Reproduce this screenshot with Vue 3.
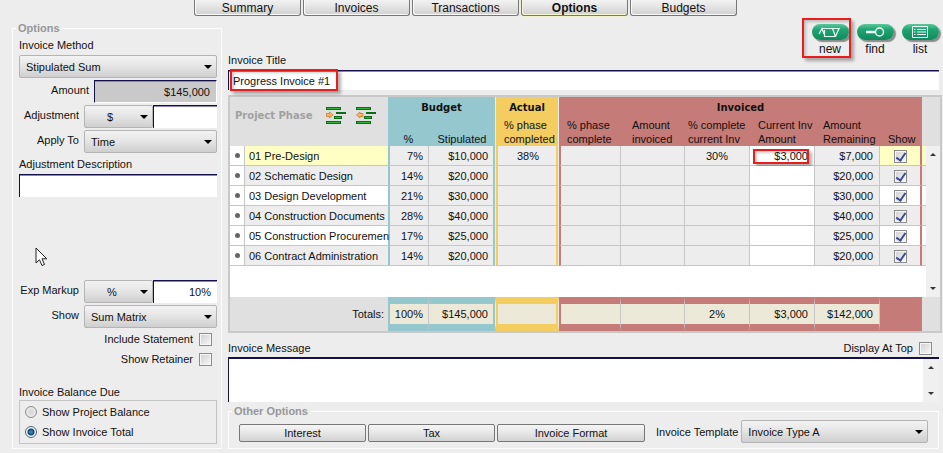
<script setup>
import { ref } from 'vue'

const tabs = ['Summary', 'Invoices', 'Transactions', 'Options', 'Budgets']
const activeTab = ref('Options')

const method = ref('Stipulated Sum')
const amount = ref('$145,000')
const adjustmentUnit = ref('$')
const adjustment = ref('')
const applyTo = ref('Time')
const description = ref('')
const markupUnit = ref('%')
const markup = ref('10%')
const showAs = ref('Sum Matrix')
const includeStatement = ref(false)
const showRetainer = ref(false)
const balance = ref('total')

const title = ref('Progress Invoice #1')
const message = ref('')
const displayAtTop = ref(false)
const template = ref('Invoice Type A')

const phases = ref([
  { name: '01 Pre-Design', pct: '7%', budget: '$10,000', done: '38%', complete: '30%', current: '$3,000', remaining: '$7,000', show: true, active: true },
  { name: '02 Schematic Design', pct: '14%', budget: '$20,000', remaining: '$20,000', show: true },
  { name: '03 Design Development', pct: '21%', budget: '$30,000', remaining: '$30,000', show: true },
  { name: '04 Construction Documents', pct: '28%', budget: '$40,000', remaining: '$40,000', show: true },
  { name: '05 Construction Procuremen', pct: '17%', budget: '$25,000', remaining: '$25,000', show: true },
  { name: '06 Contract Administration', pct: '14%', budget: '$20,000', remaining: '$20,000', show: true },
])
</script>

<template>
  <div class="page">
    <nav class="tabs">
      <button
        v-for="tab in tabs"
        :key="tab"
        type="button"
        class="tab"
        :class="{ active: tab === activeTab }"
        @click="activeTab = tab"
      >{{ tab }}</button>
    </nav>

    <div class="columns">
      <fieldset class="group">
        <legend>Options</legend>
        <div class="stack">
          <label class="line" for="method">Invoice Method</label>
          <span class="pick">
            <select id="method" v-model="method"><option>Stipulated Sum</option></select>
          </span>
          <div class="row">
            <label class="wide" for="amount">Amount</label>
            <input id="amount" v-model="amount" class="field number shaded" type="text" readonly>
          </div>
          <div class="row">
            <label for="adjustment">Adjustment</label>
            <span class="joined">
              <span class="pick unit">
                <select v-model="adjustmentUnit" aria-label="Adjustment unit"><option>$</option><option>%</option></select>
              </span>
              <input id="adjustment" v-model="adjustment" class="field number" type="text">
            </span>
          </div>
          <div class="row">
            <label for="apply">Apply To</label>
            <span class="pick">
              <select id="apply" v-model="applyTo"><option>Time</option></select>
            </span>
          </div>
          <label class="line spaced" for="description">Adjustment Description</label>
          <input id="description" v-model="description" class="field" type="text">

          <div class="void">
            <svg class="pointer" width="13" height="20" viewBox="0 0 13 20" aria-hidden="true">
              <path d="M1 1V16L4.500 12.800L7 18.500L9.500 17.400L7 11.800H11.800Z" fill="#fff" stroke="#222" stroke-width="1" />
            </svg>
          </div>

          <div class="row">
            <label for="markup">Exp Markup</label>
            <span class="joined">
              <span class="pick unit">
                <select v-model="markupUnit" aria-label="Markup unit"><option>%</option><option>$</option></select>
              </span>
              <input id="markup" v-model="markup" class="field number" type="text">
            </span>
          </div>
          <div class="row">
            <label for="showas">Show</label>
            <span class="pick">
              <select id="showas" v-model="showAs"><option>Sum Matrix</option></select>
            </span>
          </div>
          <label class="tick">Include Statement <input v-model="includeStatement" type="checkbox"></label>
          <label class="tick">Show Retainer <input v-model="showRetainer" type="checkbox"></label>

          <div class="balance" role="radiogroup" aria-labelledby="balance-title">
            <div id="balance-title" class="line">Invoice Balance Due</div>
            <div class="radios">
              <label><input v-model="balance" type="radio" name="balance" value="project"> Show Project Balance</label>
              <label><input v-model="balance" type="radio" name="balance" value="total"> Show Invoice Total</label>
            </div>
          </div>
        </div>
      </fieldset>

      <main>
        <div class="top">
          <label class="line" for="title">Invoice Title</label>
          <div class="tools">
            <button type="button" class="tool">
              <span class="pill">
                <svg width="24" height="12" viewBox="0 0 24 12" fill="none" stroke="#e9fff5" aria-hidden="true">
                  <path d="M1 8L4 2.500L6 8M4 2.500H15.500M6.500 4V10.500H17.500L21 2.500H14.500L17.500 10.500M20 2.500H22" stroke-width="1.200" />
                </svg>
              </span>
              new
              <span class="mark mark-tool"></span>
            </button>
            <button type="button" class="tool">
              <span class="pill">
                <svg width="24" height="12" viewBox="0 0 24 12" fill="none" stroke="#e9fff5" aria-hidden="true">
                  <path d="M3 6H12" stroke-width="2.500" />
                  <circle cx="16.500" cy="6" r="4" stroke-width="1.500" />
                </svg>
              </span>
              find
            </button>
            <button type="button" class="tool">
              <span class="pill">
                <svg width="24" height="12" viewBox="0 0 24 12" fill="none" stroke="#e9fff5" aria-hidden="true">
                  <path d="M4.500 .5H19.500V11.500H4.500ZM6 3.500H7.500M9 3.500H18M6 6H7.500M9 6H18M6 8.500H7.500M9 8.500H18" />
                </svg>
              </span>
              list
            </button>
          </div>
        </div>
        <div class="title-box">
          <input id="title" v-model="title" class="field title" type="text">
          <span class="mark mark-title"></span>
        </div>

        <div class="matrix">
          <table>
            <colgroup>
              <col class="w-dot"><col><col class="w-pct"><col class="w-budget"><col class="w-actual">
              <col class="w-phase"><col class="w-invoiced"><col class="w-money"><col class="w-money">
              <col class="w-money"><col class="w-show"><col class="w-tail"><col class="w-scroll">
            </colgroup>
            <thead>
              <tr class="groups">
                <th colspan="2" rowspan="2" class="corner">
                  <div class="phase-head">
                    <span>Project Phase</span>
                    <button type="button" aria-label="Indent phase">
                      <svg width="20" height="17" viewBox="0 0 20 17" aria-hidden="true">
                        <path d="M0 0H15V3H0ZM10 5H20V7H10ZM8 9H16V12H8ZM0 14H15V17H0Z" fill="#0c6b16" />
                        <path d="M1 1H14V2H1ZM9 10H15V11H9ZM1 15H14V16H1Z" fill="#35b53b" />
                        <path d="M.5 6.500H3.500V5L7 8L3.500 11V9.500H.5Z" fill="#ffb45a" stroke="#c9702a" stroke-width=".7" />
                      </svg>
                    </button>
                    <button type="button" aria-label="Outdent phase">
                      <svg width="20" height="17" viewBox="0 0 20 17" aria-hidden="true">
                        <path d="M0 0H15V3H0ZM10 5H20V7H10ZM8 9H16V12H8ZM0 14H15V17H0Z" fill="#0c6b16" />
                        <path d="M1 1H14V2H1ZM9 10H15V11H9ZM1 15H14V16H1Z" fill="#35b53b" />
                        <path d="M7 6.500H4V5L.5 8L4 11V9.500H7Z" fill="#ffb45a" stroke="#c9702a" stroke-width=".7" />
                      </svg>
                    </button>
                  </div>
                </th>
                <th colspan="2" class="teal gap-right">Budget</th>
                <th class="gold gap-right">Actual</th>
                <th colspan="6" class="rose">Invoiced</th>
                <td colspan="2" rowspan="2" class="grey"></td>
              </tr>
              <tr class="heads">
                <th class="teal mid">%</th>
                <th class="teal mid gap-right">Stipulated</th>
                <th class="gold gap-right">% phase<br>completed</th>
                <th class="rose">% phase<br>complete</th>
                <th class="rose inset">Amount<br>invoiced</th>
                <th class="rose tight">% complete<br>current Inv</th>
                <th class="rose">Current Inv<br>Amount</th>
                <th class="rose">Amount<br>Remaining</th>
                <th class="rose">Show</th>
              </tr>
            </thead>
            <tbody>
              <tr v-for="(p, i) in phases" :key="p.name" class="phase" :class="{ active: p.active, odd: i % 2 === 0 }">
                <td class="dot"><i></i></td>
                <td class="name">{{ p.name }}</td>
                <td class="num teal-start">{{ p.pct }}</td>
                <td class="num teal-end">{{ p.budget }}</td>
                <td class="mid gold-cell">{{ p.done }}</td>
                <td class="num rose-start"></td>
                <td class="num"></td>
                <td class="mid">{{ p.complete }}</td>
                <td class="num edit">{{ p.current }}<span v-if="p.active" class="mark mark-cell"></span></td>
                <td class="num">{{ p.remaining }}</td>
                <td class="mid show"><input v-model="p.show" type="checkbox" :aria-label="'Show ' + p.name"></td>
                <td class="tail"></td>
                <td v-if="i === 0" rowspan="7" class="scroll">
                  <div class="bar">
                    <button type="button" class="up" aria-label="Scroll up"></button>
                    <button type="button" class="down" aria-label="Scroll down"></button>
                  </div>
                </td>
              </tr>
              <tr class="filler"><td colspan="12"></td></tr>
            </tbody>
            <tfoot>
              <tr>
                <td colspan="2" class="grey label">Totals:</td>
                <td class="sum on-teal teal-start">100%</td>
                <td class="sum on-teal teal-end">$145,000</td>
                <td class="sum on-gold gold-cell"></td>
                <td class="sum on-rose rose-start"></td>
                <td class="sum on-rose"></td>
                <td class="sum on-rose mid">2%</td>
                <td class="sum on-rose">$3,000</td>
                <td class="sum on-rose">$142,000</td>
                <td class="rose"></td>
                <td colspan="2" class="grey"></td>
              </tr>
            </tfoot>
          </table>
        </div>

        <div class="message-head">
          <label for="message">Invoice Message</label>
          <label class="tick">Display At Top <input v-model="displayAtTop" type="checkbox"></label>
        </div>
        <div class="message">
          <textarea id="message" v-model="message"></textarea>
          <div class="bar">
            <button type="button" class="up" aria-label="Scroll message up"></button>
            <button type="button" class="down" aria-label="Scroll message down"></button>
          </div>
        </div>

        <fieldset class="group other">
          <legend>Other Options</legend>
          <div class="actions">
            <button type="button" class="push">Interest</button>
            <button type="button" class="push">Tax</button>
            <button type="button" class="push long">Invoice Format</button>
            <label for="template">Invoice Template</label>
            <span class="pick">
              <select id="template" v-model="template"><option>Invoice Type A</option></select>
            </span>
          </div>
        </fieldset>
      </main>
    </div>
  </div>
</template>

<style>
body {
  background: #ededed;
}
</style>

<style scoped>
.page,
.page * {
  box-sizing: border-box;
}
.page {
  font: 11px/14px "Liberation Sans", Arial, sans-serif;
  color: #111;
  padding-bottom: 4px;
  overflow: hidden;
}
button,
input,
select,
textarea {
  font: inherit;
  color: inherit;
  margin: 0;
  border-radius: 0;
}
button {
  padding: 0;
  border: 0;
  background: none;
}

/* tab strip */
.tabs {
  display: flex;
  justify-content: center;
  gap: 2px;
  height: 16px;
  padding-right: 12px;
}
.tab {
  width: 107px;
  font-size: 12px;
  border: 1px solid #777;
  border-top: 0;
  border-radius: 0 0 3px 3px;
  background: linear-gradient(#f2f2f2, #e6e6e6 40%, #d0d0d0);
  box-shadow: inset 1px -1px #fafafa;
}
.tab.active {
  font-weight: bold;
  box-shadow: inset 1px -1px #f4f6cf, 0 1px #f1f3cf;
}

/* page columns */
.columns {
  display: grid;
  grid-template-columns: 210px minmax(0, 1fr);
  gap: 6px;
  padding: 5px 1px 0 12px;
}
main {
  min-width: 0;
}
.group {
  margin: 0;
  min-width: 0;
  padding: 0 4px 4px 6px;
  border: 1px solid #fcfcfc;
}
.group legend {
  margin-left: -3px;
  padding: 0 2px;
  font-weight: bold;
  color: #979797;
}
.stack {
  display: flex;
  flex-direction: column;
  gap: 2px;
  padding-top: 2px;
}
.line {
  line-height: 16px;
}
.spaced {
  margin-top: 1px;
}
.row {
  display: flex;
  gap: 5px;
}
.row > label {
  flex: 0 0 60px;
  line-height: 20px;
  text-align: right;
}
.row > label.wide {
  flex-basis: 70px;
}
.joined {
  display: flex;
  flex: 1;
  min-width: 0;
}

/* form controls */
.pick {
  position: relative;
  display: flex;
  flex: 1 0 auto;
  height: 23px;
}
.pick select {
  appearance: none;
  width: 100%;
  padding: 0 18px 0 6px;
  border: 1px solid #b4b4b4;
  border-radius: 2px;
  background: linear-gradient(#f3f3f3, #e4e4e4 50%, #cfcfcf);
}
.pick::after {
  content: "";
  position: absolute;
  right: 5px;
  top: 10px;
  border: 4px solid transparent;
  border-top-color: #000;
  border-bottom: 0;
  pointer-events: none;
}
.unit {
  flex: 0 0 69px;
}
.unit select {
  padding-left: 22px;
}
.field {
  min-width: 0;
  width: 100%;
  height: 23px;
  padding: 0 6px;
  border: 0;
  border-top: 1px solid #14104a;
  border-left: 1px solid #14104a;
  background: #fff;
  box-shadow: inset 0 1px #8a86b0;
  outline: 0;
}
.number {
  text-align: right;
}
.shaded {
  background: #c9c9c9;
  border-bottom: 1px solid #fff;
  border-right: 1px solid #fff;
}
input[type="checkbox"] {
  appearance: none;
  position: relative;
  flex: none;
  width: 13px;
  height: 13px;
  border: 1px solid #8c8c8c;
  background: linear-gradient(135deg, #cfcfcf, #f8f8f8);
  box-shadow: inset 0 0 0 1px #f6f6f6;
}
input[type="checkbox"]:checked::before {
  content: "";
  position: absolute;
  left: 3px;
  top: 0;
  width: 4px;
  height: 8px;
  border: solid #3b4a96;
  border-width: 0 2px 2px 0;
  transform: rotate(35deg);
}
input[type="radio"] {
  appearance: none;
  width: 12px;
  height: 12px;
  border: 1px solid #8c8c8c;
  border-radius: 50%;
  background: radial-gradient(#d4d4d4, #f4f4f4);
}
input[type="radio"]:checked {
  border-color: #4b6478;
  background: radial-gradient(circle, #2f86b8 0 1px, #123f66 3px, #eef4f8 4px);
}
.tick {
  display: flex;
  align-items: center;
  justify-content: flex-end;
  gap: 6px;
  height: 18px;
  padding-right: 5px;
}
.void {
  position: relative;
  height: 79px;
}
.pointer {
  position: absolute;
  left: 16px;
  top: 48px;
}
.balance {
  margin-top: 14px;
}
.radios {
  display: flex;
  flex-direction: column;
  gap: 6px;
  padding: 4px 5px;
  border: 1px solid #c4c4c4;
}
.radios label {
  display: flex;
  align-items: center;
  gap: 5px;
}

/* title and tool buttons */
.top {
  display: flex;
  align-items: flex-end;
  justify-content: space-between;
  min-height: 49px;
  padding: 3px 3px 2px 0;
}
.tools {
  display: flex;
  align-self: flex-start;
  gap: 7px;
}
.tool {
  position: relative;
  display: flex;
  flex-direction: column;
  align-items: center;
  width: 38px;
  font-size: 12px;
}
.pill {
  display: flex;
  align-items: center;
  justify-content: center;
  width: 37px;
  height: 16px;
  margin-bottom: 2px;
  border-radius: 8px;
  background: linear-gradient(#5cc79b, #1fa472 35%, #108a5c);
  box-shadow: 2px 2px 1px #8b8b8b;
}
.mark {
  position: absolute;
  border: 2px solid #ea1c1c;
  box-shadow: 3px 3px 3px rgba(0, 0, 0, .3), inset 2px 2px 3px rgba(0, 0, 0, .2);
  pointer-events: none;
}
.mark-tool {
  inset: -6px -2px -2px -9px;
}
.mark-title {
  left: 2px;
  top: -1px;
  width: 108px;
  height: 22px;
}
.mark-cell {
  inset: 3px 5px 1px 3px;
}
.title-box {
  position: relative;
  margin: 0 3px 5px 0;
}
.title {
  display: block;
  height: 20px;
  padding: 0 4px;
}

/* phase matrix */
.matrix {
  border: 2px solid #c9c9c9;
  background: #fff;
}
table {
  width: 100%;
  table-layout: fixed;
  border-collapse: separate;
  border-spacing: 0;
}
.w-dot { width: 15px; }
.w-pct { width: 41px; }
.w-budget { width: 67px; }
.w-actual { width: 63px; }
.w-phase { width: 62px; }
.w-invoiced { width: 64px; }
.w-money { width: 65px; }
.w-show { width: 42px; }
.w-tail { width: 4px; }
.w-scroll { width: 14px; }
th,
td {
  padding: 0;
}
.grey,
.corner {
  background: #e0e0e0;
}
.teal { background: #95c7cf; }
.gold { background: #f3cd60; }
.rose { background: #c57b77; }
.gap-right {
  border-right: 1px solid #ededed;
}
.groups th {
  height: 21px;
  font: bold 10px/14px "DejaVu Sans", Verdana, sans-serif;
}
.groups .corner {
  vertical-align: top;
  text-align: left;
}
.phase-head {
  display: flex;
  align-items: center;
  gap: 10px;
  padding: 10px 0 0 5px;
  color: #a0a0a0;
}
.phase-head span {
  margin-right: 4px;
}
.phase-head svg {
  display: block;
}
.heads th {
  height: 28px;
  padding-left: 8px;
  font-weight: normal;
  text-align: left;
  vertical-align: bottom;
  white-space: nowrap;
}
.heads .inset {
  padding-left: 11px;
}
.heads .tight {
  padding-left: 3px;
}
.heads .mid {
  padding: 0;
  text-align: center;
}
.phase td {
  height: 20px;
  border-right: 1px solid #c6c6c6;
  border-bottom: 1px solid #c6c6c6;
  background: #ededed;
  line-height: 18px;
}
.phase .num,
.sum {
  padding-right: 6px;
  text-align: right;
}
.phase .mid,
.sum.mid {
  padding: 0;
  text-align: center;
}
.phase .dot {
  background: #fff;
}
.dot i {
  display: block;
  width: 5px;
  height: 5px;
  margin: 0 auto;
  border-radius: 50%;
  background: #666;
}
.phase .name {
  padding-left: 4px;
  border-right: 0;
  white-space: nowrap;
}
.phase.odd .name,
.phase.odd .show,
.phase.odd .tail,
.phase .edit {
  background-color: #fff;
}
.phase.active .name,
.phase.active .show,
.phase.active .tail {
  background-color: #ffffc4;
}
.phase .edit {
  position: relative;
}
.phase .teal-start,
.sum.teal-start {
  padding-right: 5px;
  border-left: 2px solid #95c7cf;
}
.phase .teal-end,
.sum.teal-end {
  padding-right: 7px;
  border-right: 1px solid #ededed;
  box-shadow: inset -2px 0 #95c7cf;
}
.phase .gold-cell,
.sum.gold-cell {
  border-left: 2px solid #f3cd60;
  border-right: 1px solid #ededed;
  box-shadow: inset -2px 0 #f3cd60;
}
.phase .rose-start,
.sum.rose-start {
  border-left: 2px solid #c57b77;
}
.phase .show {
  border-right: 2px solid #c57b77;
}
.show input {
  display: block;
  margin: 1px auto 0;
}
.phase .tail {
  border-right: 0;
}
.phase .scroll {
  height: 100%;
  border: 0;
  background: #f0f0f0;
}
.scroll .bar {
  height: 151px;
}
.bar {
  display: flex;
  flex-direction: column;
  justify-content: space-between;
  align-items: center;
  flex: 0 0 16px;
  padding: 7px 0;
  background: #f0f0f0;
}
.up,
.down {
  width: 6px;
  border: 3px solid transparent;
}
.up {
  border-top: 0;
  border-bottom-color: #333;
}
.down {
  border-bottom: 0;
  border-top-color: #333;
}
.filler td {
  height: 31px;
  background: #fff;
}
tfoot td {
  height: 34px;
}
tfoot .label {
  padding-right: 4px;
  text-align: right;
}
.sum {
  border: solid;
  border-width: 7px 1px 7px 0;
  border-right-color: #c6c6c6;
  background: #ece9d8;
}
.sum.on-teal { border-top-color: #95c7cf; border-bottom-color: #95c7cf; }
.sum.on-gold { border-top-color: #f3cd60; border-bottom-color: #f3cd60; }
.sum.on-rose { border-top-color: #c57b77; border-bottom-color: #c57b77; }

/* message */
.message-head {
  display: flex;
  align-items: center;
  justify-content: space-between;
  padding: 6px 5px 0 0;
}
.message {
  display: flex;
  height: 45px;
  margin: 0 3px 2px 0;
  border-top: 2px solid #14104a;
  border-left: 1px solid #14104a;
  background: #fff;
}
.message textarea {
  flex: 1;
  min-width: 0;
  padding: 2px 4px;
  border: 0;
  outline: 0;
  resize: none;
  overflow: hidden;
  background: #fff;
}

/* other options */
.other {
  margin-right: 3px;
  padding: 0 10px 5px;
}
.other legend {
  margin-left: -7px;
}
.actions {
  display: flex;
  align-items: center;
  gap: 2px;
  padding-top: 2px;
}
.push {
  width: 127px;
  height: 18px;
  margin-top: 3px;
  border: 1px solid #777;
  border-radius: 2px;
  background: linear-gradient(#f5f5f5, #e6e6e6 50%, #d2d2d2);
}
.push.long {
  width: 148px;
}
.actions label {
  margin: 0 1px 0 9px;
}
</style>
